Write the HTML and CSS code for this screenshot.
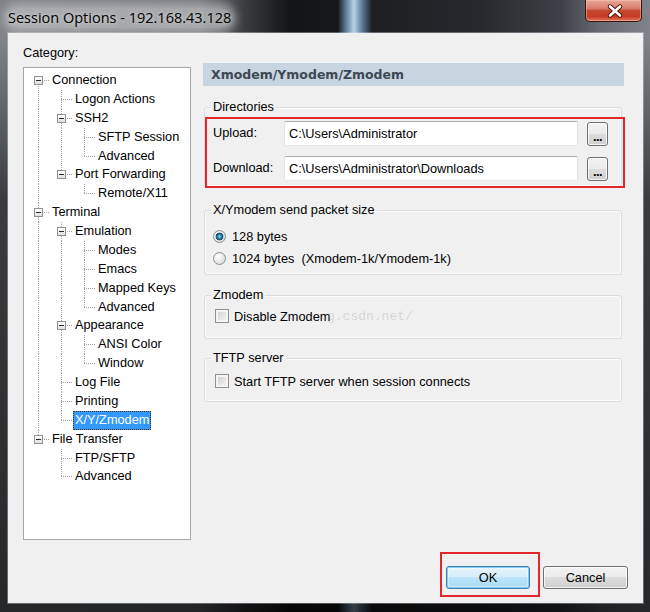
FILE: index.html
```html
<!DOCTYPE html>
<html>
<head>
<meta charset="utf-8">
<title>Session Options</title>
<link rel="stylesheet" href="styles.css">
</head>
<body>
<div class="window">
  <div class="titlebar">
    <span class="title">Session Options - 192.168.43.128</span>
    <div class="close">
      <svg width="57" height="22" viewBox="0 0 57 22">
        <path d="M24 6.5 L34 15.5 M34 6.5 L24 15.5" stroke="#4a1208" stroke-width="4.4" stroke-linecap="round" fill="none"/>
        <path d="M24 6.5 L34 15.5 M34 6.5 L24 15.5" stroke="#ffffff" stroke-width="2.6" stroke-linecap="round" fill="none"/>
      </svg>
    </div>
  </div>
  <div class="client">
    <div class="main">
      <div class="left">
        <div class="cat-label">Category:</div>
        <div class="tree">
          <div class="row"><span class="g first"><i class="box"></i></span><span class="lbl">Connection</span></div>
          <div class="row"><span class="g pipe"></span><span class="g tee"></span><span class="lbl">Logon Actions</span></div>
          <div class="row"><span class="g pipe"></span><span class="g tee"><i class="box"></i></span><span class="lbl">SSH2</span></div>
          <div class="row"><span class="g pipe"></span><span class="g pipe"></span><span class="g tee"></span><span class="lbl">SFTP Session</span></div>
          <div class="row"><span class="g pipe"></span><span class="g pipe"></span><span class="g elbow"></span><span class="lbl">Advanced</span></div>
          <div class="row"><span class="g pipe"></span><span class="g elbow"><i class="box"></i></span><span class="lbl">Port Forwarding</span></div>
          <div class="row"><span class="g pipe"></span><span class="g"></span><span class="g elbow"></span><span class="lbl">Remote/X11</span></div>
          <div class="row"><span class="g tee"><i class="box"></i></span><span class="lbl">Terminal</span></div>
          <div class="row"><span class="g pipe"></span><span class="g tee"><i class="box"></i></span><span class="lbl">Emulation</span></div>
          <div class="row"><span class="g pipe"></span><span class="g pipe"></span><span class="g tee"></span><span class="lbl">Modes</span></div>
          <div class="row"><span class="g pipe"></span><span class="g pipe"></span><span class="g tee"></span><span class="lbl">Emacs</span></div>
          <div class="row"><span class="g pipe"></span><span class="g pipe"></span><span class="g tee"></span><span class="lbl">Mapped Keys</span></div>
          <div class="row"><span class="g pipe"></span><span class="g pipe"></span><span class="g elbow"></span><span class="lbl">Advanced</span></div>
          <div class="row"><span class="g pipe"></span><span class="g tee"><i class="box"></i></span><span class="lbl">Appearance</span></div>
          <div class="row"><span class="g pipe"></span><span class="g pipe"></span><span class="g tee"></span><span class="lbl">ANSI Color</span></div>
          <div class="row"><span class="g pipe"></span><span class="g pipe"></span><span class="g elbow"></span><span class="lbl">Window</span></div>
          <div class="row"><span class="g pipe"></span><span class="g tee"></span><span class="lbl">Log File</span></div>
          <div class="row"><span class="g pipe"></span><span class="g tee"></span><span class="lbl">Printing</span></div>
          <div class="row"><span class="g pipe"></span><span class="g elbow"></span><span class="lbl sel">X/Y/Zmodem</span></div>
          <div class="row"><span class="g elbow"><i class="box"></i></span><span class="lbl">File Transfer</span></div>
          <div class="row"><span class="g"></span><span class="g tee"></span><span class="lbl">FTP/SFTP</span></div>
          <div class="row"><span class="g"></span><span class="g elbow"></span><span class="lbl">Advanced</span></div>
        </div>
      </div>
      <div class="right">
        <div class="page-head">Xmodem/Ymodem/Zmodem</div>
        <fieldset class="grp grp-dir">
          <legend>Directories</legend>
          <div class="dir-grid">
            <span class="dir-lbl">Upload:</span>
            <div class="input">C:\Users\Administrator</div>
            <button class="btn btn-dots">...</button>
            <span class="dir-lbl">Download:</span>
            <div class="input">C:\Users\Administrator\Downloads</div>
            <button class="btn btn-dots">...</button>
          </div>
        </fieldset>
        <fieldset class="grp grp-pkt">
          <legend>X/Ymodem send packet size</legend>
          <div class="opt"><span class="radio on"></span><span>128 bytes</span></div>
          <div class="opt"><span class="radio"></span><span>1024 bytes&nbsp; (Xmodem-1k/Ymodem-1k)</span></div>
        </fieldset>
        <fieldset class="grp grp-z">
          <legend>Zmodem</legend>
          <div class="opt"><span class="check"></span><span>Disable Zmodem</span></div>
        </fieldset>
        <fieldset class="grp grp-tftp">
          <legend>TFTP server</legend>
          <div class="opt"><span class="check"></span><span>Start TFTP server when session connects</span></div>
        </fieldset>
      </div>
    </div>
    <div class="footer">
      <button class="btn btn-ok">OK</button>
      <button class="btn btn-cancel">Cancel</button>
    </div>
    <div class="watermark">g.csdn.net/</div>
    <div class="mark mark-dir"></div>
    <div class="mark mark-ok"></div>
  </div>
</div>
</body>
</html>
```
FILE: styles.css
```css
html, body {
  margin: 0;
  padding: 0;
}
body {
  width: 650px;
  height: 612px;
  overflow: hidden;
  font-family: "Liberation Sans", Arial, sans-serif;
  font-size: 12.75px;
  color: #000;
  background: #1b1d20;
}

.window {
  width: 650px;
  height: 612px;
  display: flex;
  flex-direction: column;
  background:
    linear-gradient(to bottom, rgba(0,0,0,0) 0, rgba(0,0,0,0) 40px, rgba(0,0,0,0.55) 200px, rgba(0,0,0,0.7) 612px),
    linear-gradient(to right, #7f8388 0, #72767b 200px, #3a3c40 245px, #131416 290px, #17181a 338px, #5d7e9c 346px, #b9d2e8 354px, #5d7e9c 362px, #1d1f22 372px, #26292d 480px, #3d4147 560px, #676b71 600px, #80848a 650px);
}

/* title bar */
.titlebar {
  height: 33px;
  flex: none;
  display: flex;
  align-items: flex-start;
  padding: 0 8px;
  box-sizing: border-box;
}
.title {
  font-family: "Open Sans", "Noto Sans", sans-serif;
  font-size: 14.5px;
  line-height: 20px;
  margin-top: 8px;
  color: #000;
  background: rgba(205, 205, 205, 0.55);
  border-radius: 10px;
  box-shadow: 0 0 8px 5px rgba(205, 205, 205, 0.55);
  text-shadow: 0 0 5px rgba(255,255,255,0.8);
}
.close {
  margin-left: auto;
  width: 57px;
  height: 22px;
  box-sizing: border-box;
  border: 1px solid #3b1610;
  border-top: none;
  border-radius: 0 0 5px 5px;
  background: linear-gradient(to bottom, #e8a898 0, #db7d6b 40%, #c64a33 50%, #c63a22 78%, #e07a5f 100%);
  box-shadow: inset 0 0 0 1px rgba(255, 200, 190, 0.45);
}
.close svg {
  display: block;
}

/* client area */
.client {
  flex: 1;
  margin: 0 7px 9px 8px;
  background: #f0f0f0;
  padding: 12px 15px 14px 15px;
  box-sizing: border-box;
  display: flex;
  flex-direction: column;
  position: relative;
  box-shadow: 0 0 0 1px rgba(220, 230, 240, 0.35);
}
.main {
  display: grid;
  grid-template-columns: 168px 421px;
  column-gap: 12px;
}
.left {
  display: flex;
  flex-direction: column;
}
.cat-label {
  line-height: 16px;
  height: 16px;
}

/* tree */
.tree {
  --dv: repeating-linear-gradient(to bottom, #a3a3a3 0 1px, transparent 1px 2px);
  --dh: repeating-linear-gradient(to right, #a3a3a3 0 1px, transparent 1px 2px);
  margin-top: 6px;
  height: 473px;
  box-sizing: border-box;
  border: 1px solid #a2a5a9;
  background: #fff;
  padding: 3px 0 0 3px;
}
.row {
  display: flex;
  height: 18.88px;
}
.g {
  flex: none;
  width: 23px;
  height: 100%;
  display: flex;
  justify-content: center;
  align-items: flex-start;
}
.g.pipe {
  background: var(--dv) 11px 0 / 1px 100% no-repeat;
}
.g.tee {
  background:
    var(--dv) 11px 0 / 1px 100% no-repeat,
    var(--dh) 11px 9px / 13px 1px no-repeat;
}
.g.elbow {
  background:
    var(--dv) 11px 0 / 1px 10px no-repeat,
    var(--dh) 11px 9px / 13px 1px no-repeat;
}
.g.first {
  background:
    var(--dv) 11px 9px / 1px 10px no-repeat,
    var(--dh) 11px 9px / 13px 1px no-repeat;
}
.box {
  display: block;
  width: 9px;
  height: 9px;
  margin-top: 5px;
  box-sizing: border-box;
  border: 1px solid #929292;
  background:
    linear-gradient(#2b2b2b, #2b2b2b) center / 5px 1px no-repeat,
    linear-gradient(to bottom, #ffffff, #dedede);
}
.lbl {
  line-height: 18.88px;
  padding: 0 2px;
  white-space: nowrap;
}
.lbl.sel {
  background: #3399ff;
  color: #fff;
  outline: 1px dotted #4a2c08;
  outline-offset: -1px;
}

/* right panel */
.right {
  padding-top: 18px;
  display: flex;
  flex-direction: column;
}
.page-head {
  height: 23px;
  line-height: 23px;
  background: #c8d5e1;
  padding-left: 8px;
  font-family: "DejaVu Sans", "Liberation Sans", sans-serif;
  font-weight: bold;
  font-size: 12.5px;
  color: #3d4853;
}
.grp {
  margin: 0 2px 0 1px;
  min-width: 0;
  border: 1px solid #d5dde3;
  border-radius: 3px;
  box-shadow: inset 0 0 0 1px #fbfbfb;
}
.grp legend {
  padding: 0 2px;
  margin-left: -2px;
  line-height: 16px;
  background: #f0f0f0;
}
.grp-dir {
  margin-top: 13px;
  padding: 6px 13px 5px 8px;
}
.grp-pkt {
  margin-top: 15px;
  padding: 7px 8px 5px 8px;
}
.grp-z {
  margin-top: 12px;
  padding: 2px 8px 11px 8px;
}
.grp-tftp {
  margin-top: 11px;
  padding: 4px 8px 9px 8px;
}

.dir-grid {
  display: grid;
  grid-template-columns: 62px 1fr 21px;
  column-gap: 9px;
  row-gap: 10px;
  align-items: center;
}
.dir-lbl {
  padding-bottom: 3px;
}
.input {
  height: 25px;
  box-sizing: border-box;
  line-height: 23px;
  padding-left: 4px;
  background: #fff;
  border: 1px solid;
  border-color: #abadb3 #dbdfe6 #e3e9ef #e2e3ea;
  border-radius: 2px;
  white-space: nowrap;
  overflow: hidden;
}

.opt {
  display: flex;
  align-items: center;
  height: 22px;
}
.radio {
  flex: none;
  width: 13px;
  height: 13px;
  box-sizing: border-box;
  border-radius: 50%;
  border: 1px solid #8d8f91;
  background: radial-gradient(circle at 40% 35%, #ffffff 0, #e6e6e6 55%, #cdcdcd 100%);
  margin-right: 6px;
}
.radio.on {
  background:
    radial-gradient(circle at 50% 50%, #a6e0f5 0, #3b93c0 1.5px, #1b5f88 3px, #19506f 3.6px, rgba(0,0,0,0) 4.2px),
    radial-gradient(circle at 40% 35%, #ffffff 0, #e6e6e6 55%, #cdcdcd 100%);
}
.check {
  flex: none;
  width: 14px;
  height: 14px;
  box-sizing: border-box;
  margin: 0 5px 0 2px;
  border: 1px solid #8f8f8f;
  background: linear-gradient(135deg, #cdcdcd, #f7f7f7);
  box-shadow: inset 0 0 0 2px #f4f4f4;
}

/* buttons */
.btn {
  font-family: "Liberation Sans", Arial, sans-serif;
  font-size: 12.75px;
  color: #000;
  height: 23px;
  padding: 0;
  box-sizing: border-box;
  border: 1px solid #707070;
  border-radius: 3px;
  background: linear-gradient(to bottom, #f2f2f2 0, #ebebeb 50%, #dddddd 50%, #cfcfcf 100%);
  box-shadow: inset 0 0 0 1px rgba(255, 255, 255, 0.75);
}
.btn-dots {
  width: 21px;
  height: 24px;
  line-height: 14px;
  padding-top: 6px;
  font-weight: bold;
  letter-spacing: -0.5px;
}
.footer {
  margin-top: auto;
  display: flex;
  justify-content: flex-end;
  gap: 13px;
}
.btn-ok {
  width: 84px;
  border-color: #3c7fb1;
  background: linear-gradient(to bottom, #e5f4fc 0, #d4eefb 50%, #bde5fb 50%, #a8d9f4 100%);
  box-shadow: inset 0 0 0 1px #7fcdf3, inset 0 0 0 2px rgba(255,255,255,0.4);
}
.btn-cancel {
  width: 85px;
}

/* overlays */
.watermark {
  position: absolute;
  left: 319px;
  top: 276px;
  font-family: "Liberation Mono", monospace;
  font-size: 13px;
  line-height: 16px;
  color: rgba(140, 140, 140, 0.28);
  pointer-events: none;
  white-space: nowrap;
}
.mark {
  position: absolute;
  box-sizing: border-box;
  border: 2px solid #e3262c;
  pointer-events: none;
}
.mark-dir {
  left: 197px;
  top: 84px;
  width: 420px;
  height: 71px;
}
.mark-ok {
  left: 432px;
  top: 519px;
  width: 100px;
  height: 45px;
}
```
